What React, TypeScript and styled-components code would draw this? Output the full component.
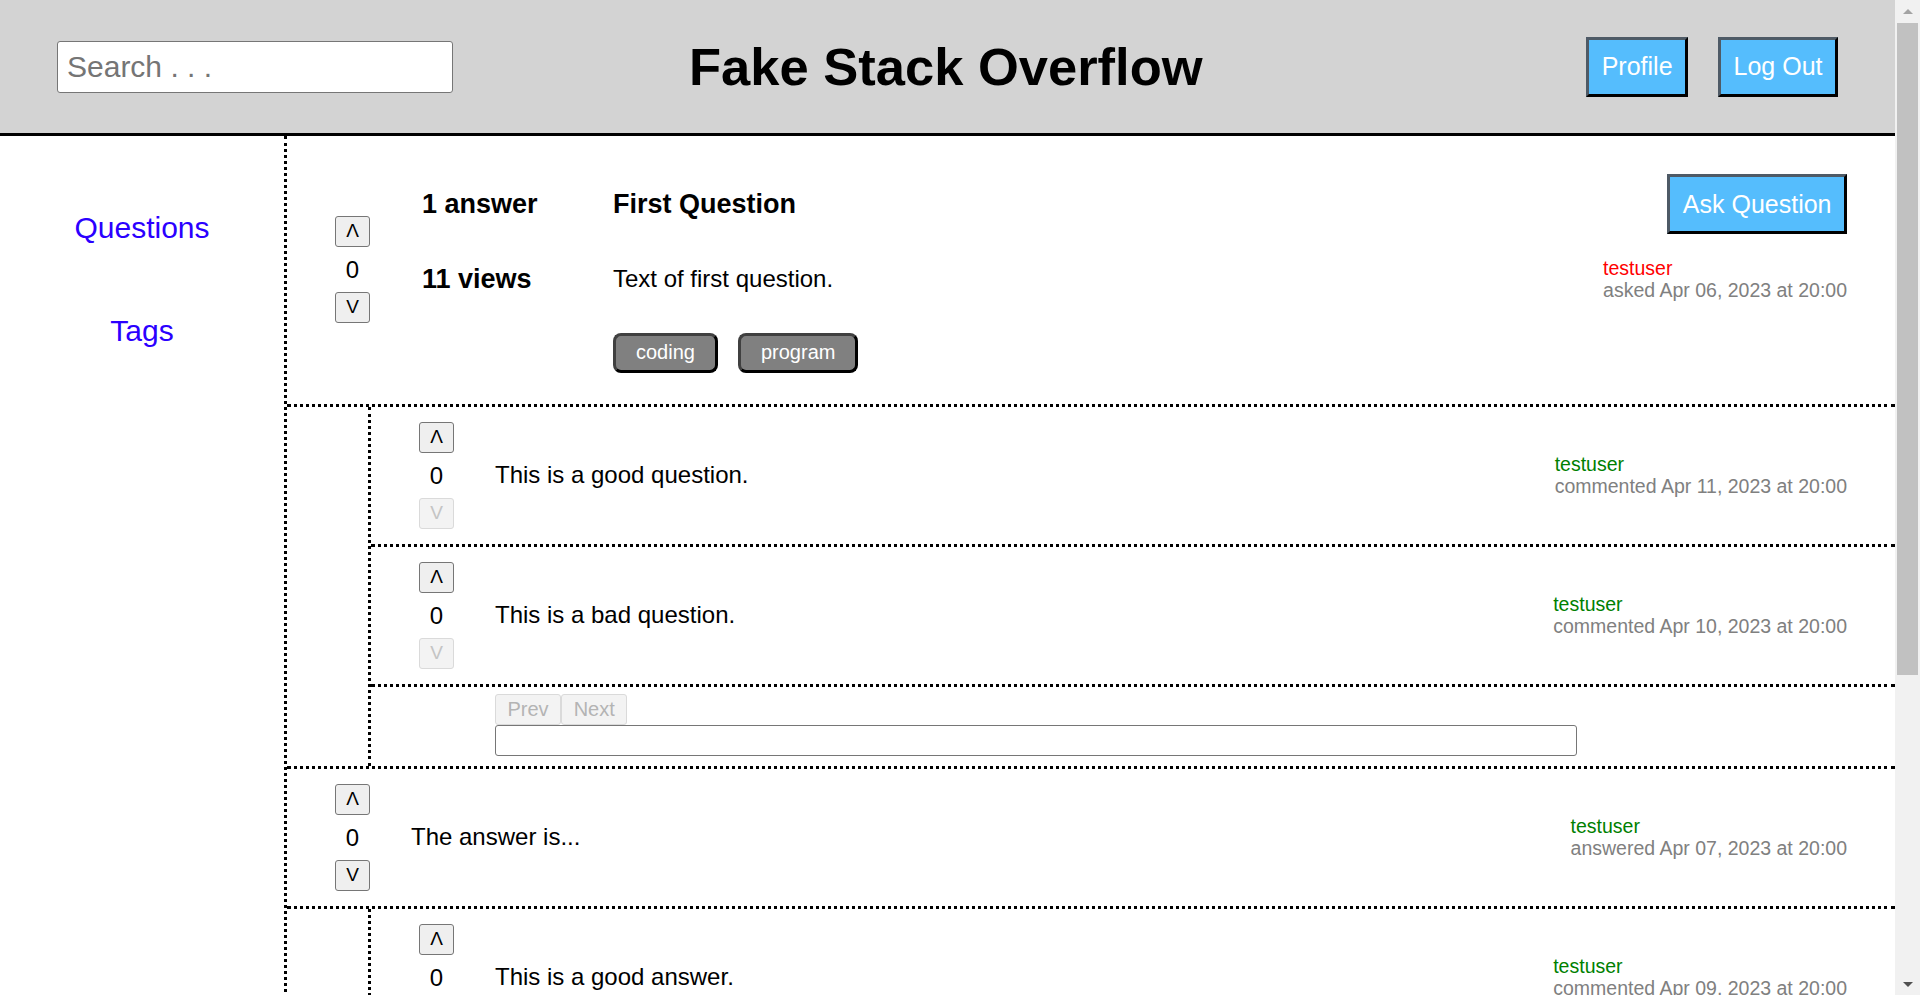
import React from "react";
import styled, { createGlobalStyle } from "styled-components";

const GlobalStyle = createGlobalStyle`
  html, body { margin: 0; padding: 0; background: #fff; }
  body { font-family: "Liberation Sans", Arial, sans-serif; color: #000; }
`;

const Page = styled.div`
  min-height: 1454px;
  margin-right: 25px;
  display: flex;
  flex-direction: column;
`;

/* window scrollbar drawn over the right edge */
const ScrollTrack = styled.div`
  position: fixed;
  top: 0;
  right: 0;
  width: 25px;
  height: 100vh;
  background: #f1f1f1;
  display: flex;
  flex-direction: column;
`;

const ScrollArrow = styled.div`
  height: 22px;
  display: flex;
  align-items: center;
  justify-content: center;
`;

const ArrowTriangle = styled.span<{ $down?: boolean; $color: string }>`
  width: 0;
  height: 0;
  border-left: 5px solid transparent;
  border-right: 5px solid transparent;
  ${(p) =>
    p.$down
      ? `border-top: 5px solid ${p.$color};`
      : `border-bottom: 5px solid ${p.$color};`}
`;

const ScrollThumb = styled.div`
  height: 652px;
  margin: 1px 2px 0 2px;
  background: #c1c1c1;
`;

const ScrollSpacer = styled.div`
  flex: 1;
`;

const Header = styled.header`
  display: flex;
  align-items: center;
  height: 133px;
  padding: 0 57px;
  background: #d3d3d3;
  border-bottom: 3px solid #000;
`;

const SearchInput = styled.input`
  box-sizing: border-box;
  width: 396px;
  height: 52px;
  padding: 0 9px;
  border: 1px solid #767676;
  border-radius: 3px;
  background: #fff;
  font-family: "Liberation Sans", Arial, sans-serif;
  font-size: 30px;
  color: #000;
  outline: none;
  &::placeholder { color: #757575; }
`;

const Title = styled.h1`
  margin: 0 0 0 236px;
  font-size: 52.5px;
  font-weight: bold;
  white-space: nowrap;
`;

const HeaderActions = styled.div`
  margin-left: auto;
  display: flex;
  gap: 30px;
`;

const BlueButton = styled.button`
  box-sizing: border-box;
  height: 60px;
  padding: 0 12.5px;
  background: #55bdfd;
  color: #fff;
  font-family: "Liberation Sans", Arial, sans-serif;
  font-size: 25px;
  border: 3px solid;
  border-color: #4e5a66 #000 #000 #4e5a66;
  cursor: pointer;
  white-space: nowrap;
`;

const Layout = styled.div`
  flex: 1;
  display: flex;
`;

const Sidebar = styled.nav`
  width: 284px;
  flex-shrink: 0;
  border-right: 3px dotted #000;
  display: flex;
  flex-direction: column;
  align-items: center;
  padding-top: 75px;
  gap: 69px;
`;

const NavLink = styled.a`
  font-size: 30px;
  color: #2b00ff;
  text-decoration: none;
  cursor: pointer;
`;

const Main = styled.main`
  flex: 1;
  min-width: 0;
`;

const QuestionHeader = styled.section`
  display: flex;
  align-items: center;
  padding: 38px 48px 31px 48px;
  border-bottom: 3px dotted #000;
`;

const VoteColumn = styled.div<{ $lift?: number }>`
  width: 35px;
  flex-shrink: 0;
  display: flex;
  flex-direction: column;
  align-items: center;
  margin-bottom: ${(p) => p.$lift ?? 0}px;
`;

const VoteButton = styled.button`
  box-sizing: border-box;
  width: 35px;
  height: 31px;
  padding: 0;
  font-family: "Liberation Sans", Arial, sans-serif;
  font-size: 19px;
  color: #000;
  background: #efefef;
  border: 1px solid #767676;
  border-radius: 3px;
  &:disabled {
    color: #c4c4c4;
    background: #f3f3f3;
    border-color: #dadada;
  }
`;

const VoteCount = styled.div`
  height: 45px;
  line-height: 45px;
  font-size: 24px;
`;

const QuestionGrid = styled.div`
  flex: 1;
  margin-left: 52px;
  display: grid;
  grid-template-columns: 191px 1fr auto;
  row-gap: 23px;
  align-items: center;
`;

const BoldText = styled.div`
  font-size: 27px;
  font-weight: bold;
`;

const BodyText = styled.div`
  font-size: 24px;
`;

const EndCell = styled.div`
  justify-self: end;
`;

const TagRow = styled.div`
  grid-column: 2;
  display: flex;
  gap: 20px;
  margin-top: 8px;
`;

const Tag = styled.button`
  box-sizing: border-box;
  height: 40px;
  padding: 0 20px;
  background: #808080;
  color: #fff;
  font-family: "Liberation Sans", Arial, sans-serif;
  font-size: 20px;
  border: 3px solid;
  border-color: #404040 #000 #000 #404040;
  border-radius: 8px;
`;

const Meta = styled.div`
  font-size: 19.5px;
  line-height: 22.4px;
  white-space: nowrap;
`;

const MetaUser = styled.div<{ $color: string }>`
  color: ${(p) => p.$color};
`;

const MetaDate = styled.div`
  color: #808080;
`;

const CommentsSection = styled.section`
  border-bottom: 3px dotted #000;
`;

const CommentsInner = styled.div`
  margin-left: 81px;
  border-left: 3px dotted #000;
`;

const PostRow = styled.div<{ $bordered?: boolean }>`
  display: flex;
  align-items: center;
  padding: 15px 48px;
  border-bottom: ${(p) => (p.$bordered ? "3px dotted #000" : "none")};
`;

const PostText = styled(BodyText)`
  flex: 1;
  margin-left: 41px;
`;

const CommentForm = styled.div`
  padding: 7px 48px 10px 124px;
`;

const Pager = styled.div`
  display: flex;
`;

const PagerButton = styled.button`
  box-sizing: border-box;
  height: 31px;
  padding: 0 11.5px;
  font-family: "Liberation Sans", Arial, sans-serif;
  font-size: 20px;
  color: #000;
  background: #efefef;
  border: 1px solid #767676;
  border-radius: 3px;
  &:disabled {
    color: #b4b4b4;
    background: #f3f3f3;
    border-color: #dadada;
  }
`;

const CommentInput = styled.input`
  box-sizing: border-box;
  display: block;
  width: 1082px;
  height: 31px;
  border: 1px solid #767676;
  border-radius: 3px;
  padding: 0 6px;
  font-family: "Liberation Sans", Arial, sans-serif;
  font-size: 20px;
  outline: none;
`;

const Footer = styled.div`
  padding: 30px 48px;
`;

type MetaInfo = { user: string; color: string; date: string };

const MetaBlock = ({ user, color, date }: MetaInfo) => (
  <Meta>
    <MetaUser $color={color}>{user}</MetaUser>
    <MetaDate>{date}</MetaDate>
  </Meta>
);

const Votes = ({ downDisabled, lift }: { downDisabled?: boolean; lift?: number }) => (
  <VoteColumn $lift={lift}>
    <VoteButton>Λ</VoteButton>
    <VoteCount>0</VoteCount>
    <VoteButton disabled={downDisabled}>V</VoteButton>
  </VoteColumn>
);

type Comment = { text: string; date: string };

const CommentList = ({ comments }: { comments: Comment[] }) => (
  <CommentsSection>
    <CommentsInner>
      {comments.map((c, i) => (
        <PostRow key={i} $bordered>
          <Votes downDisabled />
          <PostText>{c.text}</PostText>
          <MetaBlock user="testuser" color="#008000" date={`commented ${c.date}`} />
        </PostRow>
      ))}
      <CommentForm>
        <Pager>
          <PagerButton disabled>Prev</PagerButton>
          <PagerButton disabled>Next</PagerButton>
        </Pager>
        <CommentInput type="text" />
      </CommentForm>
    </CommentsInner>
  </CommentsSection>
);

export default function App() {
  return (
    <>
      <GlobalStyle />
      <Page>
        <Header>
          <SearchInput placeholder="Search . . ." />
          <Title>Fake Stack Overflow</Title>
          <HeaderActions>
            <BlueButton>Profile</BlueButton>
            <BlueButton>Log Out</BlueButton>
          </HeaderActions>
        </Header>
        <Layout>
          <Sidebar>
            <NavLink>Questions</NavLink>
            <NavLink>Tags</NavLink>
          </Sidebar>
          <Main>
            <QuestionHeader>
              <Votes lift={8} />
              <QuestionGrid>
                <BoldText>1 answer</BoldText>
                <BoldText>First Question</BoldText>
                <EndCell>
                  <BlueButton>Ask Question</BlueButton>
                </EndCell>
                <BoldText>11 views</BoldText>
                <BodyText>Text of first question.</BodyText>
                <EndCell>
                  <MetaBlock user="testuser" color="#ff0000" date="asked Apr 06, 2023 at 20:00" />
                </EndCell>
                <TagRow>
                  <Tag>coding</Tag>
                  <Tag>program</Tag>
                </TagRow>
              </QuestionGrid>
            </QuestionHeader>
            <CommentList
              comments={[
                { text: "This is a good question.", date: "Apr 11, 2023 at 20:00" },
                { text: "This is a bad question.", date: "Apr 10, 2023 at 20:00" },
              ]}
            />
            <PostRow $bordered>
              <Votes />
              <PostText>The answer is...</PostText>
              <MetaBlock user="testuser" color="#008000" date="answered Apr 07, 2023 at 20:00" />
            </PostRow>
            <CommentList comments={[{ text: "This is a good answer.", date: "Apr 09, 2023 at 20:00" }]} />
            <Footer>
              <BlueButton>Answer Question</BlueButton>
            </Footer>
          </Main>
        </Layout>
      </Page>
      <ScrollTrack>
        <ScrollArrow>
          <ArrowTriangle $color="#a3a3a3" />
        </ScrollArrow>
        <ScrollThumb />
        <ScrollSpacer />
        <ScrollArrow>
          <ArrowTriangle $down $color="#505050" />
        </ScrollArrow>
      </ScrollTrack>
    </>
  );
}
